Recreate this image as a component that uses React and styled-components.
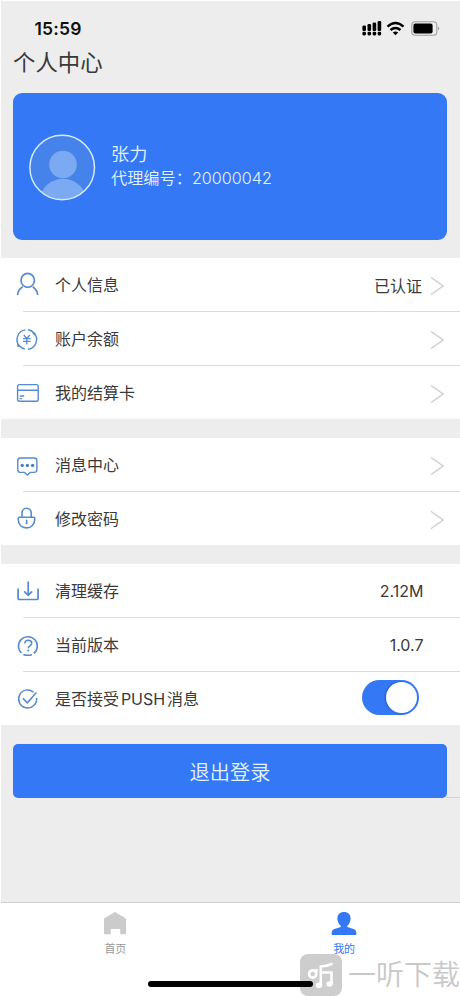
import React from "react";
import styled, { createGlobalStyle } from "styled-components";

const Global = createGlobalStyle`
  * { box-sizing: border-box; }
  body { margin: 0; background: #fff; }
`;

const Screen = styled.div`
  position: relative;
  display: flex;
  flex-direction: column;
  width: 460px;
  height: 996px;
  overflow: hidden;
  background: #ededed;
  border-top: 1px solid #fff;
  border-left: 1px solid #fff;
  color: #3a3a3a;
  font-family: Inter, "Noto Sans CJK SC", sans-serif;
  white-space: nowrap;
`;

const StatusBar = styled.header`
  display: flex;
  align-items: center;
  height: 44px;
  padding: 10px 20px 0 33.5px;
`;

const Clock = styled.span`
  flex: 1;
  padding-top: 1px;
  color: #111;
  font-size: 17.5px;
  font-weight: 600;
  line-height: 20px;
  letter-spacing: 0.2px;
`;

const StatusSvg = styled.svg`
  margin-top: -3px;
`;

const Title = styled.h1`
  margin: 0;
  padding-left: 12px;
  height: 48px;
  font-size: 22.4px;
  font-weight: 400;
  line-height: 35px;
`;

const ProfileCard = styled.section`
  display: flex;
  align-items: center;
  gap: 15px;
  height: 147px;
  margin: 0 13px 18px 12px;
  padding: 2px 0 0 16px;
  border-radius: 9px;
  background: #3478f6;
  color: #e2f3ff;
`;

const ProfileText = styled.div`
  display: flex;
  flex-direction: column;
  margin-top: -6px;
  font-weight: 350;
`;

const Name = styled.span`
  font-size: 18.2px;
  line-height: 26px;
`;

const AgentId = styled.span`
  font-size: 16.2px;
  line-height: 22px;
`;

const Group = styled.section`
  margin-bottom: 19px;
  background: #fff;
`;

const Row = styled.div`
  display: flex;
  align-items: center;
  height: ${(p) => (p.$last ? 53 : 54)}px;
  padding: 0 16px 0 14.5px;
  background: ${(p) =>
    p.$last ? "#fff" : "linear-gradient(#dcdcdc, #dcdcdc) 22px 100% / 100% 1px no-repeat #fff"};
`;

const Label = styled.span`
  flex: 1;
  padding-left: 15.5px;
  font-size: 16px;
  line-height: 24px;
`;

const LabelText = styled.span`
  word-spacing: -2.6px;
`;

const Value = styled.span`
  margin: -1px ${(p) => (p.$arrow ? 8 : 20.5)}px 0 0;
  font-size: 16px;
`;

const Icon = styled.svg`
  flex: none;
  width: 24px;
  height: 24px;
  overflow: visible;
  fill: none;
  stroke: #568bcf;
  stroke-width: 1.4;
`;

const Arrow = styled.svg`
  width: 14px;
  height: 20px;
  margin-top: 2px;
  fill: none;
  stroke: #cfcfcf;
  stroke-width: 1.4;
`;

const Toggle = styled.button`
  display: flex;
  justify-content: flex-end;
  width: 57px;
  height: 35px;
  margin: -2px 25.5px 0 0;
  padding: 2px;
  border: 0;
  border-radius: 18px;
  background: #3478f6;
`;

const Knob = styled.span`
  width: 31px;
  height: 31px;
  border-radius: 50%;
  background: #fff;
  box-shadow: -1px 0 2px rgba(0, 0, 80, 0.3);
`;

const LogoutArea = styled.div`
  height: 54px;
  padding: 0 13px 0 12px;
  background: linear-gradient(#d2d2d2, #d2d2d2) 100% 100% / 14px 1px no-repeat;
`;

const LogoutButton = styled.button`
  width: 100%;
  height: 54px;
  padding: 1px 0 0;
  border: 0;
  border-radius: 5px;
  background: #3478f6;
  color: #e2f3ff;
  font-family: inherit;
  font-size: 20.2px;
  font-weight: 350;
`;

const TabBar = styled.nav`
  display: grid;
  grid-template-columns: 1fr 1fr;
  height: 94px;
  margin-top: auto;
  padding: 8px 1.5px 0 0;
  border-top: 1.5px solid #cecece;
  background: #fff;
`;

const Tab = styled.a`
  display: flex;
  flex-direction: column;
  align-items: center;
  gap: 4px;
  color: ${(p) => (p.$active ? "#3478f6" : "#999")};
  font-size: 11px;
  line-height: 18px;
`;

const TabIcon = styled.svg`
  width: 26px;
  height: 25px;
  fill: ${(p) => (p.$active ? "#3478f6" : "#cbcbcb")};
`;

const HomeIndicator = styled.div`
  position: absolute;
  left: 147px;
  bottom: 9px;
  width: 165px;
  height: 6px;
  border-radius: 3px;
  background: #000;
`;

const Watermark = styled.div`
  position: absolute;
  left: 299px;
  bottom: 0;
  display: flex;
  align-items: center;
  gap: 6px;
  height: 42px;
  color: #c8c8c8;
  font-size: 28px;
  font-weight: 350;
  line-height: 42px;
`;

const WatermarkLogo = styled.svg`
  width: 42px;
  height: 42px;
  fill: none;
  stroke: #fff;
  stroke-width: 2.6;
  stroke-linecap: round;
`;

const icons = {
  user: (
    <g strokeWidth="1.7">
      <ellipse cx="11.7" cy="7.3" rx="6.7" ry="7" />
      <path d="M6.7 13.8Q2 16.5 1.6 22M16.7 13.8Q21 16.5 21.7 22" />
    </g>
  ),
  balance: (
    <>
      <path d="M9.5 2.9A9.7 9.7 0 0 0 3.5 19M12 22.2A9.7 9.7 0 0 0 18 6" />
      <path d="M12 2.7Q15.500 3 18 6M8.800 22Q6 21.500 3.500 19" />
      <path d="M15.8 5.8h3.6v3.5zM1.2 15.8v4l3.8-.3z" fill="#568bcf" stroke="none" />
      <path d="M7.8 8l3 3.400L13.800 8M7 11.700h7.600M7 14.300h7.600M10.800 11.500v6" strokeWidth="1.300" />
    </>
  ),
  card: (
    <>
      <rect x="1.6" y="3.6" width="20.6" height="16.6" rx="1.8" />
      <path d="M1.600 9.200H22.200M3.800 15h4.400M3.600 17.600h2.400" />
    </>
  ),
  message: (
    <>
      <path d="M4.500 5h13.700q2.700 0 2.700 2.700v9.100q0 2.600-2.700 2.600h-4L11.400 22l-2.900-2.600h-4q-2.700 0-2.700-2.600V7.700Q1.800 5 4.500 5z" />
      <g fill="#4a7dc8" stroke="none">
        <circle cx="6.2" cy="12.4" r="1.7" />
        <circle cx="11.4" cy="12.4" r="1.7" />
        <circle cx="16.600" cy="12.400" r="1.700" />
      </g>
    </>
  ),
  lock: (
    <g strokeWidth="1.6">
      <path d="M6 10V5.800a4.600 4.600 0 0 1 9.200 0V10" />
      <path d="M3.500 10.200h14q1.300 0 1.300 1.500c0 5.800-3.600 9.200-8.400 9.200S2.200 17.500 2.200 11.700q0-1.500 1.300-1.500zM10.600 12.800v4.400" />
    </g>
  ),
  download: (
    <g strokeWidth="1.7">
      <path d="M2.100 9.500v10q0 1 1 1h18q1 0 1-1v-10M12.200 2.500v13.600M8.200 12.400l4 3.900 4-3.900" />
    </g>
  ),
  help: (
    <g strokeWidth="1.6">
      <path d="M5.500 20A9.400 9.400 0 1 1 17.800 20.400M7.300 21.500q4.200 1.500 8.700.2" />
      <path d="M8.900 10.400c0-4.200 6.800-4 6.800-.2 0 2.600-3.500 2.600-3.500 5" />
      <circle cx="12.200" cy="17.400" r="1" fill="#568bcf" stroke="none" />
    </g>
  ),
  check: (
    <g strokeWidth="1.5">
      <path d="M17.600 5.200A9 9 0 1 0 20.600 11M7 11.400l4.400 4.400L20.400 5.500" />
    </g>
  ),
};

const groups = [
  [
    { icon: "user", label: "个人信息", value: "已认证", arrow: true },
    { icon: "balance", label: "账户余额", arrow: true },
    { icon: "card", label: "我的结算卡", arrow: true },
  ],
  [
    { icon: "message", label: "消息中心", arrow: true },
    { icon: "lock", label: "修改密码", arrow: true },
  ],
  [
    { icon: "download", label: "清理缓存", value: "2.12M" },
    { icon: "help", label: "当前版本", value: "1.0.7" },
    { icon: "check", label: "是否接受 PUSH 消息", toggle: true },
  ],
];

const signalBars = [
  { x: 1.4, top: 7.5 },
  { x: 6.5, top: 6 },
  { x: 11.6, top: 4.5 },
  { x: 16.600, top: 3 },
];

function StatusIcons() {
  return (
    <StatusSvg width="79" height="18" viewBox="0 0 79 18">
      {signalBars.map(({ x, top }) => (
        <g key={x}>
          <rect x={x} y={top} width="3.6" height={13 - top} rx="1.3" />
          <rect x={x} y="13.7" width="3.6" height="3.7" rx="1.3" />
        </g>
      ))}
      <path d="M34.500 17.300l-2.700-2.800q2.700-2 5.400 0z" />
      <path
        d="M26.500 8.600q8-7 16 0M29.500 12q5-4.200 10 0"
        fill="none"
        stroke="#000"
        strokeWidth="2.4"
      />
      <rect x="50.8" y="3.700" width="25" height="13.500" rx="3.3" fill="none" stroke="#a0a0a0" strokeWidth="1.1" />
      <rect x="52.4" y="5.400" width="19.2" height="10" rx="2" />
      <path d="M77 8.500q2.300 2 0 4z" fill="#999" />
    </StatusSvg>
  );
}

function Avatar() {
  return (
    <svg width="67" height="67" viewBox="0 0 67 67">
      <defs>
        <clipPath id="avatar-clip">
          <circle cx="33.2" cy="33.5" r="32" />
        </clipPath>
      </defs>
      <circle cx="33.2" cy="33.5" r="32.3" fill="#4583ea" />
      <g fill="#7caaf2" clipPath="url(#avatar-clip)">
        <circle cx="34" cy="30.5" r="13.8" />
        <path d="M12 60c3-9 12-15.300 22-15.300s19 6.300 22 15.300v7H12z" />
      </g>
      <circle cx="33.2" cy="33.5" r="32.3" fill="none" stroke="#d4ebff" strokeWidth="1.5" />
    </svg>
  );
}

function MenuRow({ item, last }) {
  return (
    <Row $last={last}>
      <Icon viewBox="0 0 24 24">{icons[item.icon]}</Icon>
      <Label>
        <LabelText>{item.label}</LabelText>
      </Label>
      {item.value && <Value $arrow={item.arrow}>{item.value}</Value>}
      {item.arrow && (
        <Arrow viewBox="0 0 14 20">
          <path d="M.8 1.300L13 10 .8 18.700" />
        </Arrow>
      )}
      {item.toggle && (
        <Toggle role="switch" aria-checked="true">
          <Knob />
        </Toggle>
      )}
    </Row>
  );
}

export default function App() {
  return (
    <>
      <Global />
      <Screen>
        <StatusBar>
          <Clock>15:59</Clock>
          <StatusIcons />
        </StatusBar>
        <Title>个人中心</Title>
        <ProfileCard>
          <Avatar />
          <ProfileText>
            <Name>张力</Name>
            <AgentId>代理编号：20000042</AgentId>
          </ProfileText>
        </ProfileCard>
        {groups.map((rows, g) => (
          <Group key={g}>
            {rows.map((item, i) => (
              <MenuRow key={item.icon} item={item} last={i === rows.length - 1} />
            ))}
          </Group>
        ))}
        <LogoutArea>
          <LogoutButton>退出登录</LogoutButton>
        </LogoutArea>
        <TabBar>
          <Tab>
            <TabIcon viewBox="0 0 26 25">
              <path d="M13 1L24 7.500V23.300H18.200V18H8.800V23.300H2V7.500z" />
            </TabIcon>
            首页
          </Tab>
          <Tab $active>
            <TabIcon $active viewBox="0 0 26 25">
              <path d="M13 1c4 0 6.600 2.600 6.600 6.500 0 3.200-1.400 5.800-3.300 7.200v1.300l7 2.300q2 .8 2 3.200V24H.7v-2.500q0-2.400 2-3.200l7-2.300v-1.300C7.800 13.300 6.400 10.700 6.400 7.500 6.400 3.600 9 1 13 1z" />
            </TabIcon>
            我的
          </Tab>
        </TabBar>
        <Watermark>
          <WatermarkLogo viewBox="0 0 42 42">
            <rect width="42" height="42" rx="8" fill="#cdcdcd" stroke="none" />
            <circle cx="12.700" cy="20" r="3.600" />
            <path d="M16.500 17.500V16M20.800 31V12.500q6-.2 10.700-2.500M21 18.500h10.500V29" />
            <g fill="#fff" stroke="none">
              <ellipse cx="19" cy="31.300" rx="3.200" ry="2.800" />
              <ellipse cx="29.500" cy="30" rx="3.200" ry="2.800" />
            </g>
          </WatermarkLogo>
          一听下载
        </Watermark>
        <HomeIndicator />
      </Screen>
    </>
  );
}
